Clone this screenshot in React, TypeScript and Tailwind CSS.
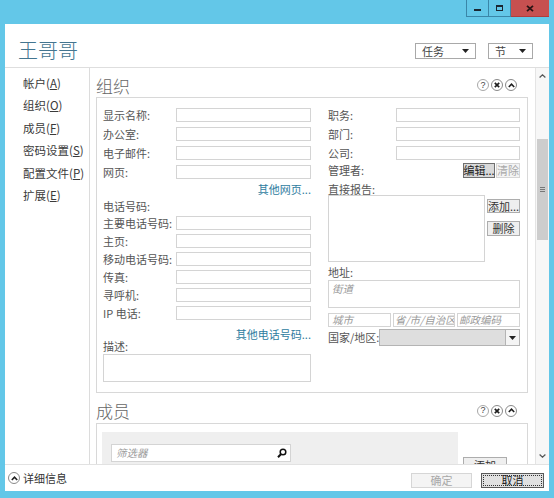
import React from "react";

const font = "font-['Noto_Sans_CJK_SC','Microsoft_YaHei',sans-serif]";
const field = "border border-[#d4d4d4] bg-white";

function Field({ w, h = "h-[14px]", children }: { w: string; h?: string; children?: React.ReactNode }) {
  return <div className={`${w} ${h} ${field} shrink-0 overflow-hidden`}>{children}</div>;
}

function Row({
  label,
  labelW,
  inputW,
  className = "",
}: {
  label: string;
  labelW: string;
  inputW: string;
  className?: string;
}) {
  return (
    <div className={`flex items-center h-[14px] ${className}`}>
      <span className={`${labelW} shrink-0 whitespace-nowrap leading-none`}>{label}</span>
      <Field w={inputW} />
    </div>
  );
}

function Btn({
  text,
  className = "",
  kind = "normal",
}: {
  text: string;
  className?: string;
  kind?: "normal" | "focus" | "disabled";
}) {
  const look =
    kind === "focus"
      ? "bg-[#d9d9d9] border-[#6f6f6f] text-[#222]"
      : kind === "disabled"
      ? "bg-[#f4f4f4] border-[#d6d6d6] text-[#a8a8a8]"
      : "bg-[#efefef] border-[#adadad] text-[#333]";
  return (
    <div className={`border flex items-center justify-center leading-none whitespace-nowrap shrink-0 ${look} ${className}`}>
      {text}
    </div>
  );
}

function HeadIcons() {
  return (
    <div className="flex items-center gap-[2px] pr-[11px]">
      <div className="w-[12px] h-[12px] rounded-full border border-[#a8a8a8] flex items-center justify-center text-[9px] leading-none text-[#444] font-['Liberation_Sans',sans-serif]">
        ?
      </div>
      <div className="w-[12px] h-[12px] rounded-full border border-[#8a8a8a] flex items-center justify-center">
        <svg width="6" height="6" viewBox="0 0 6 6">
          <path d="M0.8 0.8 L5.2 5.2 M5.2 0.8 L0.8 5.2" stroke="#1f1f1f" strokeWidth="1.7" />
        </svg>
      </div>
      <div className="w-[12px] h-[12px] rounded-full border border-[#8a8a8a] flex items-center justify-center">
        <svg width="7" height="5" viewBox="0 0 7 5">
          <path d="M0.8 4 L3.5 1.2 L6.2 4" stroke="#1f1f1f" strokeWidth="1.6" fill="none" />
        </svg>
      </div>
    </div>
  );
}

function Tri() {
  return (
    <svg width="7" height="4" viewBox="0 0 7 4">
      <path d="M0 0 H7 L3.5 4 Z" fill="#222" />
    </svg>
  );
}

const navItems: [string, string][] = [
  ["帐户", "A"],
  ["组织", "O"],
  ["成员", "F"],
  ["密码设置", "S"],
  ["配置文件", "P"],
  ["扩展", "E"],
];

export default function App() {
  return (
    <div className={`w-[554px] h-[498px] bg-[#63c7e8] flex flex-col overflow-hidden text-[#555] text-[11px] ${font}`}>
      {/* caption bar */}
      <div className="h-[24px] shrink-0 flex justify-end pr-[5px]">
        <div className="flex h-[17px]">
          <div className="w-[23px] border-x border-b border-[#3a86a8] flex items-start justify-center pt-[9px]">
            <div className="w-[7px] h-[2px] bg-[#1b2631]" />
          </div>
          <div className="w-[22px] border-r border-b border-[#3a86a8] flex items-start justify-center pt-[5px]">
            <div className="w-[7px] h-[6px] border border-t-2 border-[#1b2631]" />
          </div>
          <div className="w-[38px] bg-[#c75050] border-b border-[#b03c3c] flex items-start justify-center pt-[5px]">
            <svg width="8" height="7" viewBox="0 0 8 7">
              <path d="M1 0.8 L7 6.2 M7 0.8 L1 6.2" stroke="#2a1414" strokeWidth="1.8" />
            </svg>
          </div>
        </div>
      </div>

      {/* window body */}
      <div className="mx-[5px] flex-1 min-h-0 bg-white flex flex-col">
        <div className="h-[44px] shrink-0 border-b border-[#dedede] flex items-start">
          <div className="mt-[14px] ml-[13px] text-[20px] font-light leading-[24px] text-[#437590]">王哥哥</div>
          <div className="ml-auto mt-[19px] mr-[16px] flex gap-[12px]">
            <div className="w-[61px] h-[16px] border border-[#a9a9a9] flex items-center justify-between px-[6px] leading-none text-[#444]">
              <span>任务</span>
              <Tri />
            </div>
            <div className="w-[45px] h-[16px] border border-[#a9a9a9] flex items-center justify-between px-[6px] leading-none text-[#444]">
              <span>节</span>
              <Tri />
            </div>
          </div>
        </div>

        <div className="flex-1 min-h-0 flex">
          {/* sidebar */}
          <div className="w-[85px] shrink-0 border-r border-[#dcdcdc] pt-[4px] pl-[18px] text-[11.5px] text-[#3a3a3a]">
            {navItems.map(([name, key]) => (
              <div key={key} className="h-[22.5px] flex items-center leading-none whitespace-nowrap">
                {name}(<span className="underline">{key}</span>)
              </div>
            ))}
          </div>

          {/* scroll content */}
          <div className="flex-1 min-w-0 overflow-hidden pl-[6px] pr-[7px]">
            <div className="h-[29px] pt-[5px] flex items-center justify-between">
              <span className="text-[17px] font-light leading-none text-[#666]">组织</span>
              <HeadIcons />
            </div>
            <div className="border border-[#d8d8d8] px-[6px] pt-[10px] pb-[10px] flex gap-[17px]">
              {/* left column */}
              <div className="w-[208px] shrink-0 flex flex-col">
                <Row label="显示名称:" labelW="w-[73px]" inputW="w-[135px]" />
                <Row label="办公室:" labelW="w-[73px]" inputW="w-[135px]" className="mt-[5px]" />
                <Row label="电子邮件:" labelW="w-[73px]" inputW="w-[135px]" className="mt-[5px]" />
                <Row label="网页:" labelW="w-[73px]" inputW="w-[135px]" className="mt-[5px]" />
                <div className="mt-[3px] h-[14px] flex items-center justify-end leading-none text-[#2e7ca0]">其他网页...</div>
                <div className="mt-[3px] h-[14px] flex items-center leading-none">电话号码:</div>
                <Row label="主要电话号码:" labelW="w-[73px]" inputW="w-[135px]" className="mt-[3px]" />
                <Row label="主页:" labelW="w-[73px]" inputW="w-[135px]" className="mt-[4px]" />
                <Row label="移动电话号码:" labelW="w-[73px]" inputW="w-[135px]" className="mt-[4px]" />
                <Row label="传真:" labelW="w-[73px]" inputW="w-[135px]" className="mt-[4px]" />
                <Row label="寻呼机:" labelW="w-[73px]" inputW="w-[135px]" className="mt-[4px]" />
                <Row label="IP 电话:" labelW="w-[73px]" inputW="w-[135px]" className="mt-[4px]" />
                <div className="mt-[8px] h-[12px] flex items-center justify-end leading-none text-[#2e7ca0]">其他电话号码...</div>
                <div className="h-[12px] flex items-center leading-none">描述:</div>
                <Field w="w-[208px]" h="h-[28px] mt-[2px]" />
              </div>

              {/* right column */}
              <div className="w-[192px] shrink-0 flex flex-col">
                <Row label="职务:" labelW="w-[68px]" inputW="w-[124px]" />
                <Row label="部门:" labelW="w-[68px]" inputW="w-[124px]" className="mt-[5px]" />
                <Row label="公司:" labelW="w-[68px]" inputW="w-[124px]" className="mt-[5px]" />
                <div className="mt-[3px] h-[15px] flex items-center">
                  <span className="flex-1 leading-none">管理者:</span>
                  <Btn text="编辑..." kind="focus" className="w-[32px] h-[15px]" />
                  <Btn text="清除" kind="disabled" className="ml-[1px] w-[24px] h-[15px]" />
                </div>
                <div className="mt-[5px] h-[12px] flex items-center leading-none">直接报告:</div>
                <div className="flex">
                  <Field w="w-[157px]" h="h-[67px]" />
                  <div className="ml-[2px] w-[33px] flex flex-col">
                    <Btn text="添加..." className="mt-[4px] h-[14px]" />
                    <Btn text="删除" className="mt-[8px] h-[15px]" />
                  </div>
                </div>
                <div className="mt-[4px] h-[12px] flex items-center leading-none">地址:</div>
                <Field w="w-[192px]" h="h-[28px] mt-[2px]">
                  <div className="pl-[3px] pt-[1px] italic text-[10.5px] leading-[13px] text-[#9a9a9a]">街道</div>
                </Field>
                <div className="mt-[5px] h-[14px] flex gap-[2px] italic text-[10.5px] text-[#9a9a9a]">
                  <Field w="w-[63px]">
                    <div className="pl-[3px] leading-[12px] whitespace-nowrap">城市</div>
                  </Field>
                  <Field w="w-[62px]">
                    <div className="pl-[1px] leading-[12px] whitespace-nowrap">省/市/自治区</div>
                  </Field>
                  <Field w="w-[63px]">
                    <div className="pl-[1px] leading-[12px] whitespace-nowrap">邮政编码</div>
                  </Field>
                </div>
                <div className="mt-[2px] h-[17px] flex items-center">
                  <span className="w-[51px] shrink-0 leading-none whitespace-nowrap">国家/地区:</span>
                  <div className="flex-1 h-[17px] border border-[#b4b4b4] bg-[#dedede] flex justify-end">
                    <div className="w-[14px] border-l border-[#b4b4b4] bg-[#f4f4f4] flex items-center justify-center">
                      <Tri />
                    </div>
                  </div>
                </div>
              </div>
            </div>

            <div className="h-[30px] pt-[5px] flex items-center justify-between">
              <span className="text-[17px] font-light leading-none text-[#666]">成员</span>
              <HeadIcons />
            </div>
            <div className="border border-[#d8d8d8] pl-[5px] pt-[8px] h-[80px] flex">
              <div className="w-[356px] h-[60px] bg-[#efefef] pl-[9px] pt-[12px]">
                <div className={`w-[180px] h-[18px] ${field} flex items-center justify-between pl-[4px] pr-[3px]`}>
                  <span className="italic text-[10.5px] leading-none text-[#9a9a9a]">筛选器</span>
                  <svg width="10" height="10" viewBox="0 0 10 10">
                    <circle cx="6" cy="4" r="2.8" stroke="#111" strokeWidth="1.5" fill="none" />
                    <path d="M4.1 6 L1 9.2" stroke="#111" strokeWidth="2" />
                  </svg>
                </div>
              </div>
              <Btn text="添加" className="ml-[5px] mt-[25px] w-[44px] h-[16px] border-[#8a8a8a]" />
            </div>
          </div>

          {/* scrollbar */}
          <div className="w-[14px] shrink-0 bg-[#f7f7f7] border-l border-[#e4e4e4] flex flex-col">
            <div className="h-[16px] flex items-center justify-center">
              <svg width="7" height="4" viewBox="0 0 7 4">
                <path d="M0.6 3.5 L3.5 0.8 L6.4 3.5" stroke="#555" strokeWidth="1.2" fill="none" />
              </svg>
            </div>
            <div className="mt-[55px] mx-[1px] h-[101px] bg-[#cdcdcd] flex flex-col items-center justify-center gap-[1px]">
              <div className="w-[5px] h-px bg-[#777]" />
              <div className="w-[5px] h-px bg-[#777]" />
              <div className="w-[5px] h-px bg-[#777]" />
            </div>
            <div className="flex-1" />
            <div className="h-[16px] flex items-center justify-center">
              <svg width="7" height="4" viewBox="0 0 7 4">
                <path d="M0.6 0.5 L3.5 3.2 L6.4 0.5" stroke="#555" strokeWidth="1.2" fill="none" />
              </svg>
            </div>
          </div>
        </div>

        {/* footer */}
        <div className="h-[27px] shrink-0 border-t border-[#e2e2e2] flex items-center pl-[3px] pr-[5px]">
          <div className="w-[12px] h-[12px] rounded-full border border-[#8a8a8a] flex items-center justify-center">
            <svg width="7" height="5" viewBox="0 0 7 5">
              <path d="M0.8 4 L3.5 1.2 L6.2 4" stroke="#1f1f1f" strokeWidth="1.6" fill="none" />
            </svg>
          </div>
          <span className="ml-[3px] leading-none text-[#333]">详细信息</span>
          <div className="ml-auto self-end mb-[3px] flex gap-[9px]">
            <Btn text="确定" kind="disabled" className="w-[61px] h-[15px]" />
            <div className="w-[63px] h-[15px] border border-[#5a5a5a] bg-[#e1e1e1] p-[1px]">
              <div className="w-full h-full border border-dotted border-[#333] flex items-center justify-center leading-none text-[#222]">
                取消
              </div>
            </div>
          </div>
        </div>
      </div>
      <div className="h-[7px] shrink-0" />
    </div>
  );
}
